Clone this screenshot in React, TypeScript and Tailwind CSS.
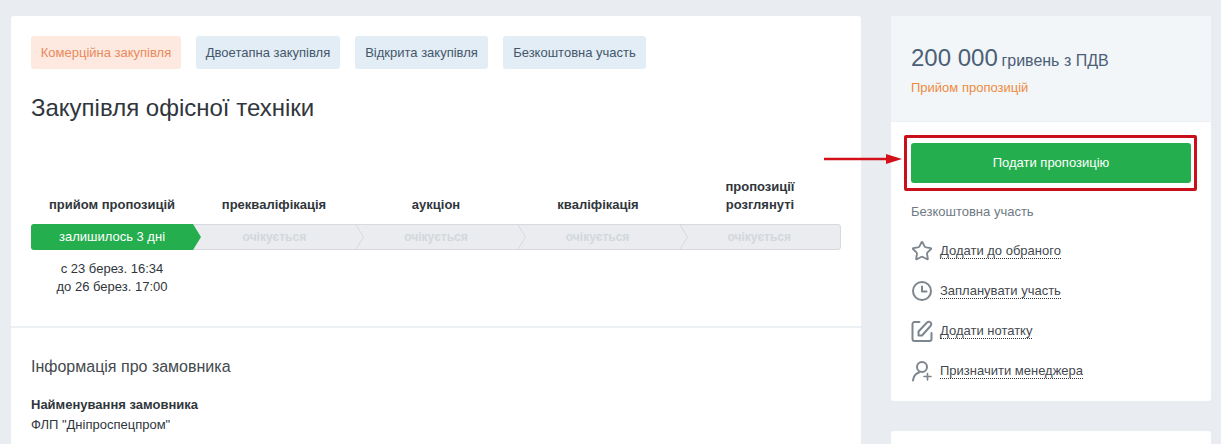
import { Star } from 'lucide-react';

const chips = [
  { label: 'Комерційна закупівля', cls: 'bg-[#fde9df] text-[#e98a5e]', w: 'w-[150px]' },
  { label: 'Двоетапна закупівля', cls: 'bg-[#e2edf6] text-[#44576a]', w: 'w-[144px]' },
  { label: 'Відкрита закупівля', cls: 'bg-[#e2edf6] text-[#44576a]', w: 'w-[133px]' },
  { label: 'Безкоштовна участь', cls: 'bg-[#e2edf6] text-[#44576a]', w: 'w-[143px]' },
];

const steps = [
  ['прийом пропозицій'],
  ['прекваліфікація'],
  ['аукціон'],
  ['кваліфікація'],
  ['пропозиції', 'розглянуті'],
];

const ClockIcon = () => (
  <svg width="22" height="22" viewBox="0 0 22 22" fill="none" stroke="#7d868e" strokeWidth="2" strokeLinecap="round" strokeLinejoin="round">
    <circle cx="11" cy="11" r="9" />
    <path d="M11 6.5V11.5H15.5" />
  </svg>
);

const NoteIcon = () => (
  <svg width="22" height="22" viewBox="0 0 22 22" fill="none" stroke="#7d868e" strokeWidth="2" strokeLinecap="round" strokeLinejoin="round">
    <path d="M8.5 2H3.5A2 2 0 0 0 1.5 4V19A2 2 0 0 0 3.5 21H18.5A2 2 0 0 0 20.5 19V13" />
    <path d="M7.5 15.5V11.5L16 2.5A2.2 2.2 0 0 1 19.5 2.5A2.4 2.4 0 0 1 19.5 6L11 15.5Z" />
  </svg>
);

const ManagerIcon = () => (
  <svg width="22" height="22" viewBox="0 0 22 22" fill="none" stroke="#7d868e" strokeWidth="2" strokeLinecap="round">
    <circle cx="11" cy="7" r="5" />
    <path d="M2 20.5C2.5 16 5 13.5 8 12.5" />
    <path d="M13 16.5H20M16.5 13.5V20" strokeWidth="1.6" />
  </svg>
);

const actions = [
  { label: 'Додати до обраного', icon: <Star size={22} color="#7d868e" strokeWidth={2} /> },
  { label: 'Запланувати участь', icon: <ClockIcon /> },
  { label: 'Додати нотатку', icon: <NoteIcon /> },
  { label: 'Призначити менеджера', icon: <ManagerIcon /> },
];

const App = () => {
  return (
    <div className="relative h-[444px] overflow-hidden bg-[#e9edf2] font-['Liberation_Sans',Arial,sans-serif] text-[13px]">
      <div className="flex gap-[30px] pl-[11px] pt-4">
        {/* left column */}
        <div className="w-[850px] h-[500px] shrink-0 rounded-t-[3px] bg-white">
          <div className="px-5 pt-5 h-[290px] border-b-2 border-[#edf0f3] box-content">
            <div className="flex gap-[15px]">
              {chips.map((c) => (
                <span key={c.label} className={`flex h-[33px] items-center justify-center rounded-[3px] text-[13px] ${c.cls} ${c.w}`}>
                  {c.label}
                </span>
              ))}
            </div>
            <h1 className="mt-[24px] text-[24px] leading-[30px] text-[#30363c]">Закупівля офісної техніки</h1>

            <div className="mt-[47px] w-[810px]">
              <div className="grid h-[44px] grid-cols-5 items-end">
                {steps.map((s) => (
                  <div key={s[0]} className="text-center text-[13px] font-bold leading-[18px] text-[#30363c]">
                    {s.map((l) => (
                      <div key={l}>{l}</div>
                    ))}
                  </div>
                ))}
              </div>
              <div className="relative mt-[10px] grid h-[26px] grid-cols-5 rounded-[3px] border border-[#d6dade] bg-[#eaecef] text-center text-[12px] leading-[24px]">
                <span className="text-[#d3d8dc] font-bold col-start-2">очікується</span>
                <span className="text-[#d3d8dc] font-bold">очікується</span>
                <span className="text-[#d3d8dc] font-bold">очікується</span>
                <span className="text-[#d3d8dc] font-bold">очікується</span>
                <div className="absolute -left-px -top-px flex h-[26px] w-[170px] items-center rounded-l-[3px] bg-[#25ae4e] [clip-path:polygon(0_0,162px_0,170px_50%,162px_100%,0_100%)]">
                  <span className="w-[162px] text-center text-[13px] text-white">залишилось 3 дні</span>
                </div>
                {[324, 486, 648].map((x) => (
                  <svg key={x} className="absolute -top-px" style={{ left: x - 1 }} width="9" height="26" viewBox="0 0 9 26" fill="none" stroke="#d6dade">
                    <path d="M0.5 0L8.5 13L0.5 26" />
                  </svg>
                ))}
              </div>
              <div className="mt-[10px] w-[162px] text-center text-[13px] leading-[18px] text-[#30363c]">
                <div>с 23 берез. 16:34</div>
                <div>до 26 берез. 17:00</div>
              </div>
            </div>
          </div>

          <div className="px-5">
            <h2 className="mt-[28px] text-[16px] leading-[22px] text-[#44494e]">Інформація про замовника</h2>
            <div className="mt-[18px] font-bold leading-[18px] text-[#30363c]">Найменування замовника</div>
            <div className="mt-[2px] leading-[18px] text-[#30363c]">ФЛП "Дніпроспецпром"</div>
          </div>
        </div>

        {/* right column */}
        <div className="w-[320px] shrink-0">
          <div className="h-[385px] rounded-[3px] bg-white">
            <div className="h-[106px] rounded-t-[3px] border-b border-[#edf0f3] bg-[#f3f6f9] px-5 pt-[27px]">
              <div className="leading-[30px] text-[#4a6076]">
                <span className="text-[24px]">200 000</span> <span className="text-[16px]">гривень з ПДВ</span>
              </div>
              <div className="mt-[2px] text-[13px] leading-[18px] text-[#ee8a3c]">Прийом пропозицій</div>
            </div>
            <div className="px-5">
              <div className="relative mt-[21px]">
                <button className="h-10 w-[280px] rounded-[3px] bg-[#25ae4e] text-[13px] text-white">Подати пропозицію</button>
                <div className="absolute -left-[7px] -top-2 h-[56px] w-[293px] rounded-[2px] border-[3px] border-[#c9101a]" />
              </div>
              <div className="mt-[20px] leading-[18px] text-[#6f7a84]">Безкоштовна участь</div>
              <div className="mt-[19px] flex flex-col gap-[18px]">
                {actions.map((a) => (
                  <div key={a.label} className="flex h-[22px] items-center gap-[7px]">
                    <span className="flex w-[22px] justify-center">{a.icon}</span>
                    <span className="border-b border-dotted border-[#30363c] text-[13px] leading-[15px] text-[#44494e]">{a.label}</span>
                  </div>
                ))}
              </div>
            </div>
          </div>
          <div className="mt-[30px] h-[100px] rounded-[3px] bg-white" />
        </div>
      </div>

      {/* annotation arrow */}
      <svg className="absolute left-[823px] top-[153px]" width="80" height="12" viewBox="0 0 80 12">
        <path d="M1 6H66" stroke="#d3101a" strokeWidth="2.5" />
        <path d="M63 1L79 6L63 11Z" fill="#d3101a" />
      </svg>
    </div>
  );
};

export default App;
